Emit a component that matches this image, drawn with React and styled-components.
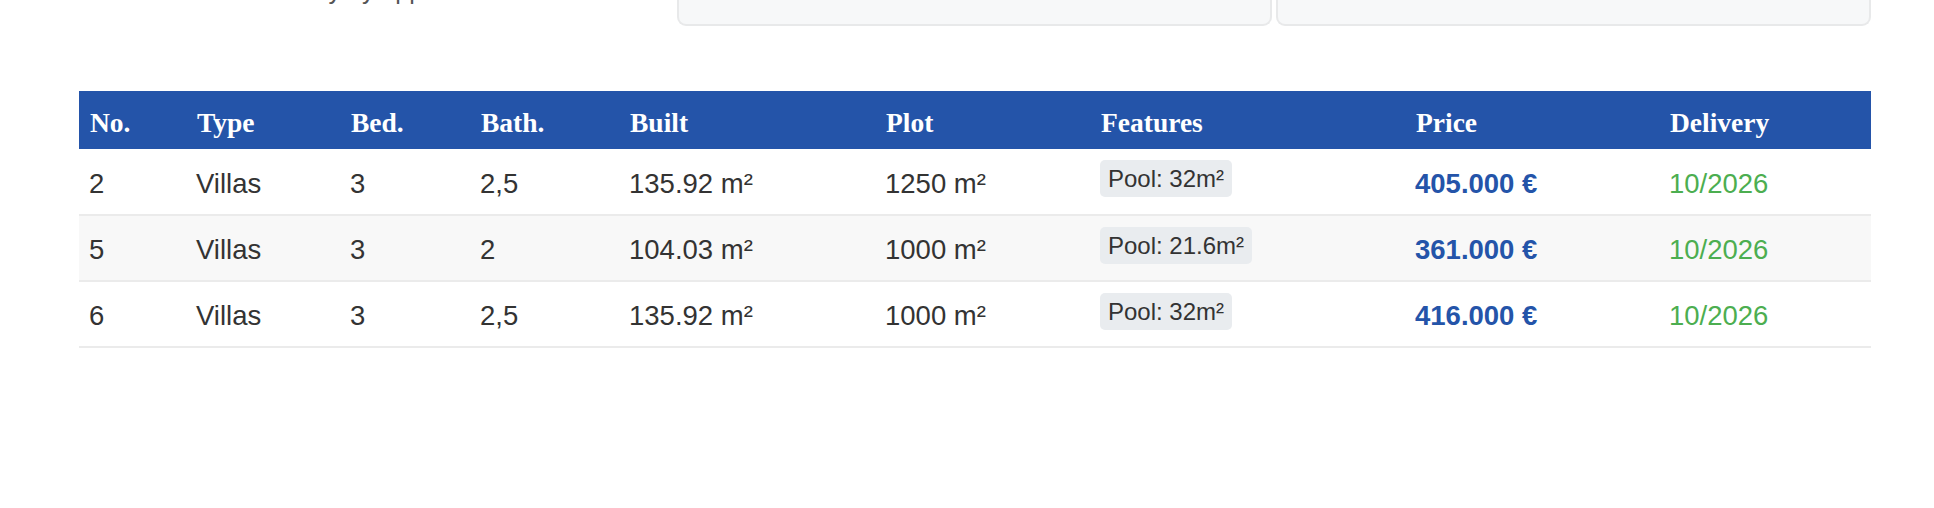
import styled, { createGlobalStyle } from "styled-components";

const GlobalStyle = createGlobalStyle`
  html, body {
    margin: 0;
    padding: 0;
    background: #fff;
    overflow: hidden;
  }
  body {
    font-family: "Liberation Sans", Arial, sans-serif;
    color: #333;
  }
`;

const units = [
  { no: 2, type: "Villas", bed: 3, bath: "2,5", built: "135.92 m²", plot: "1250 m²", pool: "Pool: 32m²", price: "405.000 €", delivery: "10/2026" },
  { no: 5, type: "Villas", bed: 3, bath: "2", built: "104.03 m²", plot: "1000 m²", pool: "Pool: 21.6m²", price: "361.000 €", delivery: "10/2026" },
  { no: 6, type: "Villas", bed: 3, bath: "2,5", built: "135.92 m²", plot: "1000 m²", pool: "Pool: 32m²", price: "416.000 €", delivery: "10/2026" },
];

const columns = [
  { label: "No.", width: 107 },
  { label: "Type", width: 154 },
  { label: "Bed.", width: 130 },
  { label: "Bath.", width: 149 },
  { label: "Built", width: 256 },
  { label: "Plot", width: 215 },
  { label: "Features", width: 315 },
  { label: "Price", width: 254 },
  { label: "Delivery", width: 212 },
];

const Page = styled.div`
  padding: 0 63px 0 79px;
`;

const Top = styled.div`
  display: flex;
  align-items: flex-end;
  height: 120px;
  margin-top: -94px;
`;

const Intro = styled.div`
  flex: 1;
  padding-left: 150px;
  padding-bottom: 21px;
  font-size: 25px;
  line-height: 30px;
  color: #555;
  white-space: nowrap;
  overflow: hidden;
`;

const Cards = styled.div`
  display: flex;
  gap: 4px;
  width: 1194px;
  height: 100%;
`;

const Card = styled.div`
  flex: 1;
  background: #f7f8f9;
  border: 2px solid #e8e9ea;
  border-top: none;
  border-radius: 0 0 9px 9px;
`;

const Table = styled.table`
  width: 100%;
  margin-top: 65px;
  border-collapse: collapse;
  table-layout: fixed;
`;

const Th = styled.th`
  box-sizing: border-box;
  height: 58px;
  padding: 5px 11px 0;
  background: #2454a9;
  color: #fff;
  font-family: "Liberation Serif", "Times New Roman", serif;
  font-weight: bold;
  font-size: 27.5px;
  text-align: left;
  white-space: nowrap;
`;

const Row = styled.tr`
  background: ${(props) => (props.$striped ? "#f8f8f8" : "#fff")};
  border-bottom: 2px solid #ebebeb;
`;

const Td = styled.td`
  box-sizing: border-box;
  height: 66px;
  padding: 4px 10px 0;
  font-size: 27.5px;
  color: #333;
  vertical-align: middle;
  white-space: nowrap;
`;

const Pill = styled.span`
  display: inline-block;
  padding: 4px 8px;
  border-radius: 5px;
  background: #e9ecef;
  font-size: 24px;
  line-height: 29px;
  color: #333;
  position: relative;
  top: -5px;
`;

const Price = styled.span`
  color: #2454a9;
  font-weight: bold;
`;

const Delivery = styled.span`
  color: #4cae50;
`;

const App = () => {
  return (
    <>
      <GlobalStyle />
      <Page>
        <Top>
          <Intro>Visits only by appointment</Intro>
          <Cards>
            <Card />
            <Card />
          </Cards>
        </Top>
        <Table>
          <colgroup>
            {columns.map((c) => (
              <col key={c.label} style={{ width: c.width }} />
            ))}
          </colgroup>
          <thead>
            <tr>
              {columns.map((c) => (
                <Th key={c.label}>{c.label}</Th>
              ))}
            </tr>
          </thead>
          <tbody>
            {units.map((u, i) => (
              <Row key={u.no} $striped={i % 2 === 1}>
                <Td>{u.no}</Td>
                <Td>{u.type}</Td>
                <Td>{u.bed}</Td>
                <Td>{u.bath}</Td>
                <Td>{u.built}</Td>
                <Td>{u.plot}</Td>
                <Td>
                  <Pill>{u.pool}</Pill>
                </Td>
                <Td>
                  <Price>{u.price}</Price>
                </Td>
                <Td>
                  <Delivery>{u.delivery}</Delivery>
                </Td>
              </Row>
            ))}
          </tbody>
        </Table>
      </Page>
    </>
  );
};

export default App;
